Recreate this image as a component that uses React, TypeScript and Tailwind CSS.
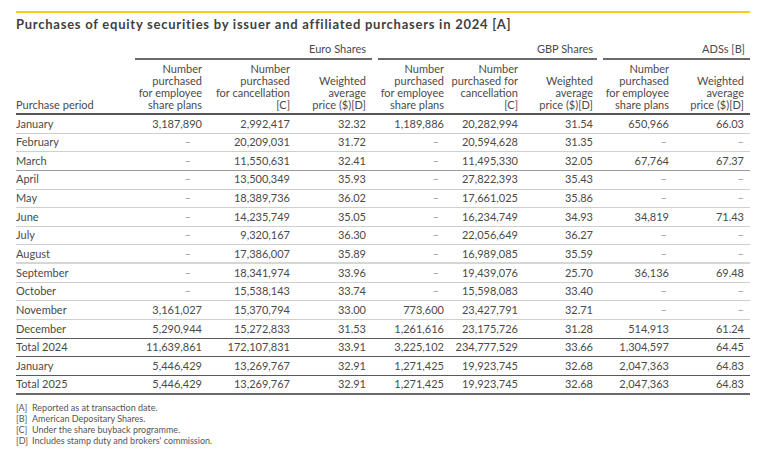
import React from "react";

type Row = { label: string; v: string[]; line: string };

const D = "–";

const rows: Row[] = [
  { label: "January", v: ["3,187,890", "2,992,417", "32.32", "1,189,886", "20,282,994", "31.54", "650,966", "66.03"], line: "light" },
  { label: "February", v: [D, "20,209,031", "31.72", D, "20,594,628", "31.35", D, D], line: "light" },
  { label: "March", v: [D, "11,550,631", "32.41", D, "11,495,330", "32.05", "67,764", "67.37"], line: "mid" },
  { label: "April", v: [D, "13,500,349", "35.93", D, "27,822,393", "35.43", D, D], line: "light" },
  { label: "May", v: [D, "18,389,736", "36.02", D, "17,661,025", "35.86", D, D], line: "light" },
  { label: "June", v: [D, "14,235,749", "35.05", D, "16,234,749", "34.93", "34,819", "71.43"], line: "light" },
  { label: "July", v: [D, "9,320,167", "36.30", D, "22,056,649", "36.27", D, D], line: "light" },
  { label: "August", v: [D, "17,386,007", "35.89", D, "16,989,085", "35.59", D, D], line: "thick" },
  { label: "September", v: [D, "18,341,974", "33.96", D, "19,439,076", "25.70", "36,136", "69.48"], line: "light" },
  { label: "October", v: [D, "15,538,143", "33.74", D, "15,598,083", "33.40", D, D], line: "light" },
  { label: "November", v: ["3,161,027", "15,370,794", "33.00", "773,600", "23,427,791", "32.71", D, D], line: "light" },
  { label: "December", v: ["5,290,944", "15,272,833", "31.53", "1,261,616", "23,175,726", "31.28", "514,913", "61.24"], line: "dark" },
  { label: "Total 2024", v: ["11,639,861", "172,107,831", "33.91", "3,225,102", "234,777,529", "33.66", "1,304,597", "64.45"], line: "dark" },
  { label: "January", v: ["5,446,429", "13,269,767", "32.91", "1,271,425", "19,923,745", "32.68", "2,047,363", "64.83"], line: "dark" },
  { label: "Total 2025", v: ["5,446,429", "13,269,767", "32.91", "1,271,425", "19,923,745", "32.68", "2,047,363", "64.83"], line: "bottom" },
];

const dashPad = ["pr-[17px]", "", "", "pr-[11px]", "", "", "pr-[8px]", "pr-[6px]"];

const lineCls: Record<string, string> = {
  light: "border-b border-[#cfcfcf]",
  mid: "border-b border-[#9a9a9a]",
  thick: "border-b-2 border-[#d6d6d6]",
  dark: "border-b border-[#5a5a5a]",
  bottom: "border-b-2 border-[#6a6a6a]",
};

const headers = [
  ["Number", "purchased", "for employee", "share plans"],
  ["Number", "purchased", "for cancellation", "[C]"],
  ["Weighted", "average", "price ($)[D]"],
  ["Number", "purchased", "for employee", "share plans"],
  ["Number", "purchased for", "cancellation", "[C]"],
  ["Weighted", "average", "price ($)[D]"],
  ["Number", "purchased", "for employee", "share plans"],
  ["Weighted", "average", "price ($)[D]"],
];

export default function App() {
  return (
    <div className="w-[761px] h-[455px] bg-white font-['Lato',sans-serif] text-[#4a4a4a] pt-[11px] pl-[16px] pr-[11px]">
      <div className="h-[2px] bg-[#f8cc1b]" />
      <h1 className="mt-[2px] text-[13px] leading-[18px] font-bold text-[#3f3f3f] tracking-[0.75px]">
        Purchases of equity securities by issuer and affiliated purchasers in 2024 [A]
      </h1>
      <div className="mt-[8px] grid grid-cols-[114px_78px_88px_76px_78px_74px_75px_76px_75px] text-[11px]">
        {/* group header */}
        <div />
        <div className="col-span-3 pl-[5px]">
          <div className="border-b-2 border-[#6a6a6a] h-[19px] pr-[6px] text-right leading-[15px]">Euro Shares</div>
        </div>
        <div className="col-span-3 pl-[6px] pr-[2px]">
          <div className="border-b-2 border-[#6a6a6a] h-[19px] pr-[4px] text-right leading-[15px]">GBP Shares</div>
        </div>
        <div className="col-span-2 pl-[4px]">
          <div className="border-b-2 border-[#6a6a6a] h-[19px] pr-[5px] text-right leading-[15px]">ADSs [B]</div>
        </div>

        {/* column header */}
        <div className="border-b-2 border-[#555] flex items-end pb-[2px] leading-[12px] h-[55px]">Purchase period</div>
        {headers.map((h, i) => (
          <div key={i} className="border-b-2 border-[#555] flex flex-col justify-end items-end pb-[2px] pr-[6px] leading-[12px] h-[55px] text-right">
            {h.map((t, j) => (
              <span key={j} className="whitespace-nowrap">{t}</span>
            ))}
          </div>
        ))}

        {/* rows */}
        {rows.map((r, ri) => (
          <React.Fragment key={ri}>
            <div className={`h-[18.65px] flex items-center ${lineCls[r.line]}`}>{r.label}</div>
            {r.v.map((c, ci) => (
              <div
                key={ci}
                className={`h-[18.65px] flex items-center justify-end pr-[6px] ${lineCls[r.line]} ${c === D ? "text-[#9a9a9a] " + dashPad[ci] : ""}`}
              >
                {c}
              </div>
            ))}
          </React.Fragment>
        ))}
      </div>
      <div className="mt-[7px] text-[9px] leading-[11px] text-[#555]">
        {[
          ["[A]", "Reported as at transaction date."],
          ["[B]", "American Depositary Shares."],
          ["[C]", "Under the share buyback programme."],
          ["[D]", "Includes stamp duty and brokers' commission."],
        ].map(([k, t]) => (
          <div key={k} className="flex">
            <span className="w-[16px]">{k}</span>
            <span>{t}</span>
          </div>
        ))}
      </div>
    </div>
  );
}
